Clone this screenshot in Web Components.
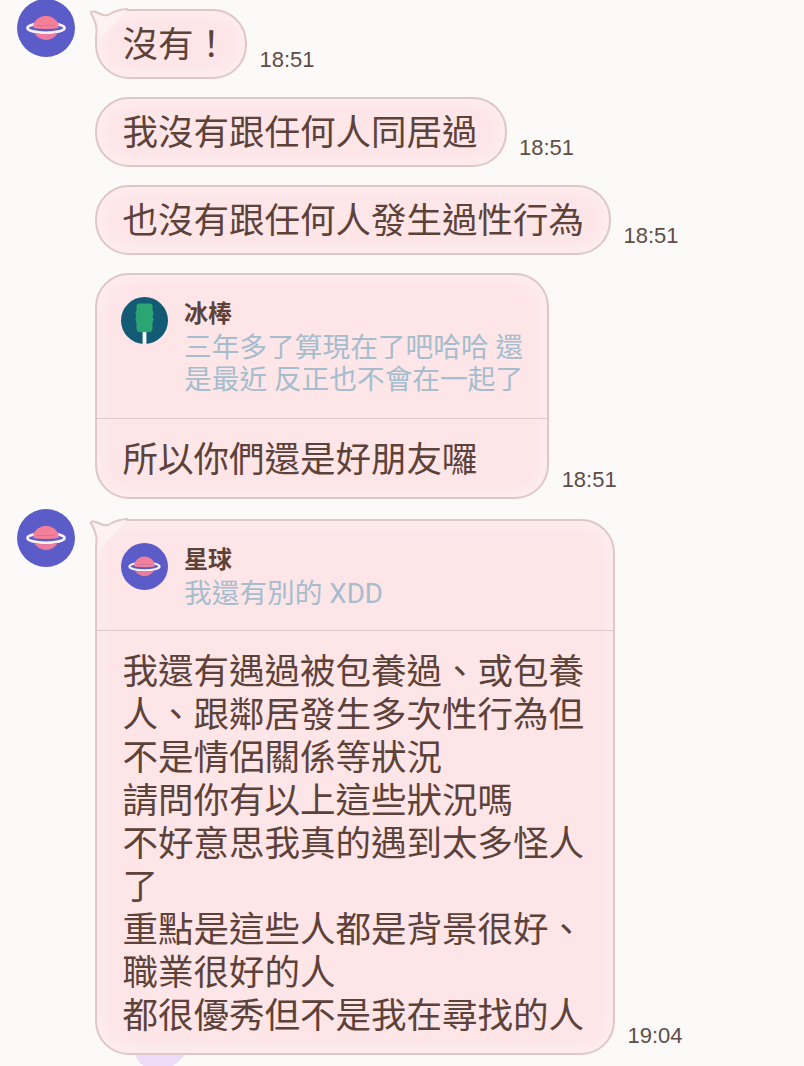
<!DOCTYPE html>
<html lang="zh-Hant">
<head>
<meta charset="utf-8">
<title>chat</title>
<style>
  html, body{
    margin: 0;
    background-color: #fcfaf9;
  }

  body{
    height: 1066px;
    overflow: hidden;
    font-family: Roboto, "Noto Sans CJK TC", sans-serif;
    color: #5d4239;
  }
</style>
</head>
<body>
  <chat-list>
    <chat-message time="18:51" avatar>
      <chat-bubble tail style="--pad-right: 16px">沒有！</chat-bubble>
    </chat-message>
    <chat-message time="18:51">
      <chat-bubble>我沒有跟任何人同居過</chat-bubble>
    </chat-message>
    <chat-message time="18:51">
      <chat-bubble style="--pad-right: 25px">也沒有跟任何人發生過性行為</chat-bubble>
    </chat-message>
    <chat-message time="18:51">
      <chat-bubble>
        <chat-quote slot="quote" name="冰棒" kind="popsicle" style="--pad-bottom: 22px">三年多了算現在了吧哈哈 還<br>是最近 反正也不會在一起了</chat-quote>
        所以你們還是好朋友囉
      </chat-bubble>
    </chat-message>
    <chat-message time="19:04" avatar class="new-group">
      <chat-bubble tail style="--pad-right: 29px">
        <chat-quote slot="quote" name="星球" kind="planet">我還有別的 XDD</chat-quote>
        我還有遇過被包養過、或包養<br>人、跟鄰居發生多次性行為但<br>不是情侶關係等狀況<br>請問你有以上這些狀況嗎<br>不好意思我真的遇到太多怪人<br>了<br>重點是這些人都是背景很好、<br>職業很好的人<br>都很優秀但不是我在尋找的人
      </chat-bubble>
    </chat-message>
    <chat-sticker></chat-sticker>
  </chat-list>

<script>
const planetIcon = /* html */`
  <svg xmlns="http://www.w3.org/2000/svg" viewBox="0 0 58 58" width="100%" height="100%">
    <circle cx="29" cy="29" r="29" fill="#5b5cc8"/>
    <ellipse cx="29" cy="29" rx="18.5" ry="4.8" fill="none" stroke="#f8f0f3" stroke-width="2.8"/>
    <path d="M16 26.5 A13.5 13.5 0 0 1 42 26.5 Z" fill="#f47f98"/>
    <path d="M16.5 26.5 H41.5 V29 Q29 31 16.5 29 Z" fill="#f47f98"/>
    <path d="M17.5 34.5 Q29 35.5 40.5 34.5 A13.5 13.5 0 0 1 17.5 34.5 Z" fill="#ea7ca2"/>
  </svg>`

const popsicleIcon = /* html */`
  <svg xmlns="http://www.w3.org/2000/svg" viewBox="0 0 47 47" width="100%" height="100%">
    <circle cx="23.5" cy="23.5" r="23.5" fill="#135a75"/>
    <rect x="21.6" y="33" width="3.8" height="14" fill="#f4f8f6"/>
    <path d="M18 6.5 H29 Q31.5 6.5 31.5 9.5 V13 Q33.5 16.5 31.5 19.5 Q33.5 22.5 31.5 25.5 V31 Q31.5 35 28.5 35 H18.5 Q15.5 35 15.5 31 V25.5 Q13.5 22.5 15.5 19.5 Q13.5 16.5 15.5 13 V9.5 Q15.5 6.5 18 6.5 Z" fill="#2ba673"/>
  </svg>`

class ChatList extends HTMLElement {
  constructor () {
    super()
    this.shadow = this.attachShadow({ mode: 'open' })
  }

  connectedCallback () {
    this.shadow.innerHTML =
    /* html */`
    <style>
      :host{
        display: flex;
        flex-direction: column;
        gap: 18px;
        padding: 9px 0 0 17px;
      }
    </style>
    <slot></slot>
    `
  }
}

class ChatMessage extends HTMLElement {
  constructor () {
    super()
    this.shadow = this.attachShadow({ mode: 'open' })
  }

  connectedCallback () {
    const time = this.getAttribute('time')
    const avatar = this.hasAttribute('avatar') ? planetIcon : ''

    this.shadow.innerHTML =
    /* html */`
    <style>
      :host{
        display: flex;
        align-items: flex-start;
      }

      :host(.new-group){
        margin-top: 2px;
      }

      .avatar{
        flex: none;
        width: 58px;
        height: 58px;
        margin: -10px 20px 0 0;
      }

      .content{
        display: flex;
        align-items: flex-end;
        gap: 12.5px;
      }

      .time{
        color: #5f4d47;
        font-family: "Liberation Sans", sans-serif;
        font-size: 22px;
        line-height: 26px;
        margin-bottom: 6px;
      }
    </style>
    <div class="avatar">${avatar}</div>
    <div class="content">
      <slot></slot>
      <div class="time">${time}</div>
    </div>
    `
  }
}

class ChatBubble extends HTMLElement {
  constructor () {
    super()
    this.shadow = this.attachShadow({ mode: 'open' })
  }

  connectedCallback () {
    const hasQuote = this.querySelector('chat-quote') !== null
    const tail = this.hasAttribute('tail')
      ? /* html */`
        <svg class="tail" xmlns="http://www.w3.org/2000/svg" viewBox="-6 -1 42 36" width="42" height="36">
          <path d="M33 0 C25 0 18 3 13 6 C9 7 6 5.5 2 3.5 C-1 2 -5 2 -4 4.5 C-2 8 2 14 1.5 22 C1 27 1 30 1 34 Z" fill="#fef1f2"/>
          <path d="M33 0 C25 0 18 3 13 6 C9 7 6 5.5 2 3.5 C-1 2 -5 2 -4 4.5 C-2 8 2 14 1.5 22 C1 27 1 30 1 34" fill="none" stroke="#e0c6c7" stroke-width="2"/>
        </svg>`
      : ''

    this.shadow.innerHTML =
    /* html */`
    <style>
      :host{
        display: block;
        position: relative;
        flex: none;
        background-color: #fde5e8;
        border: 2px solid #e0c6c7;
        border-radius: 34px;
        box-shadow: inset 0 0 20px rgba(255, 255, 255, .55);
      }

      .tail{
        position: absolute;
        left: -8px;
        top: -3px;
      }

      .text{
        font-size: 35.5px;
        line-height: 43px;
        padding: 13px var(--pad-right, 27px) 10px 25.5px;
      }

      .text.below-quote{
        padding-top: 20px;
        padding-bottom: 15px;
      }
    </style>
    ${tail}
    <slot name="quote"></slot>
    <div class="text ${hasQuote ? 'below-quote' : ''}"><slot></slot></div>
    `
  }
}

class ChatQuote extends HTMLElement {
  constructor () {
    super()
    this.shadow = this.attachShadow({ mode: 'open' })
  }

  connectedCallback () {
    const icon = this.getAttribute('kind') === 'planet' ? planetIcon : popsicleIcon

    this.shadow.innerHTML =
    /* html */`
    <style>
      :host{
        display: flex;
        gap: 16px;
        padding: 23px 24px var(--pad-bottom, 20px) 24px;
        border-bottom: 1px solid #e0c9c9;
      }

      .icon{
        flex: none;
        width: 47px;
        height: 47px;
        margin-top: -1px;
      }

      .name{
        color: #5d4239;
        font-size: 24px;
        font-weight: 700;
        line-height: 32px;
        margin-bottom: 2px;
      }

      .message{
        color: #a5bdcd;
        font-size: 27.7px;
        line-height: 32px;
        white-space: nowrap;
      }
    </style>
    <div class="icon">${icon}</div>
    <div>
      <div class="name">${this.getAttribute('name')}</div>
      <div class="message"><slot></slot></div>
    </div>
    `
  }
}

class ChatSticker extends HTMLElement {
  constructor () {
    super()
    this.shadow = this.attachShadow({ mode: 'open' })
  }

  connectedCallback () {
    this.shadow.innerHTML =
    /* html */`
    <style>
      :host{
        display: block;
        width: 50px;
        height: 12px;
        margin: -18px 0 0 118px;
        background-color: #eddcf8;
        clip-path: polygon(0 0, 100% 0, 86% 60%, 72% 100%, 20% 100%, 8% 60%);
      }
    </style>
    `
  }
}

customElements.define('chat-list', ChatList)
customElements.define('chat-message', ChatMessage)
customElements.define('chat-bubble', ChatBubble)
customElements.define('chat-quote', ChatQuote)
customElements.define('chat-sticker', ChatSticker)
</script>
</body>
</html>
